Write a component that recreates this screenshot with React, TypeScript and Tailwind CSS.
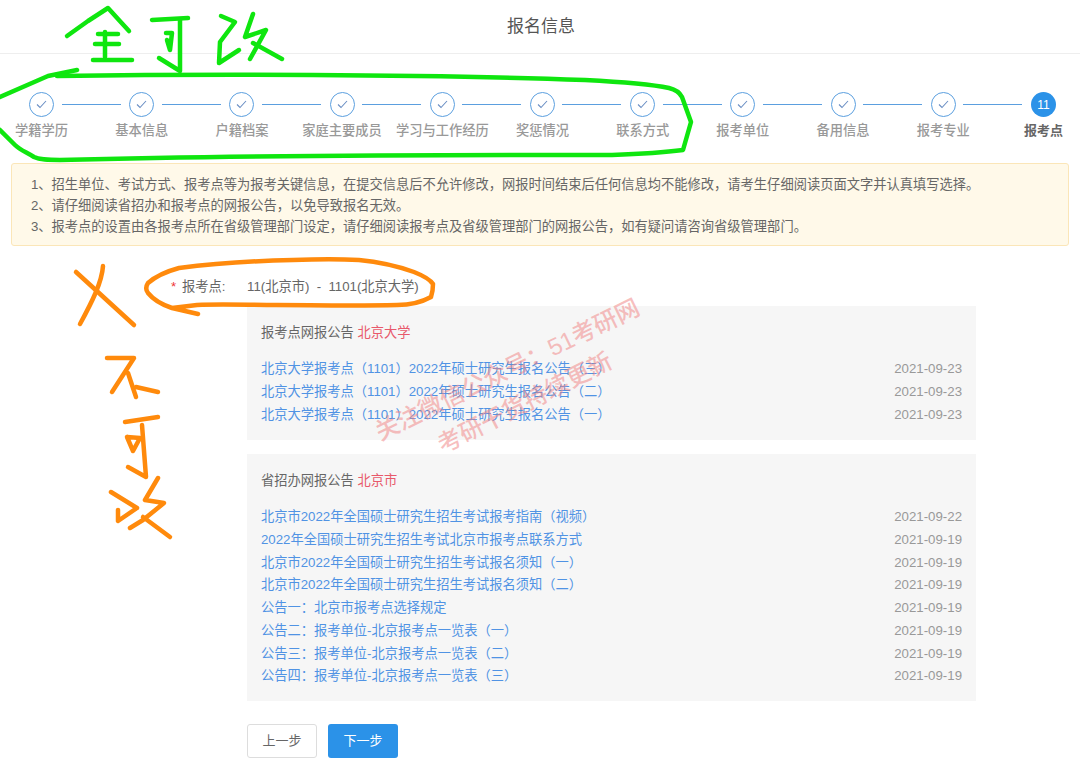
const steps = ["学籍学历", "基本信息", "户籍档案", "家庭主要成员", "学习与工作经历", "奖惩情况", "联系方式", "报考单位", "备用信息", "报考专业"];

const notes = [
  "1、招生单位、考试方式、报考点等为报考关键信息，在提交信息后不允许修改，网报时间结束后任何信息均不能修改，请考生仔细阅读页面文字并认真填写选择。",
  "2、请仔细阅读省招办和报考点的网报公告，以免导致报名无效。",
  "3、报考点的设置由各报考点所在省级管理部门设定，请仔细阅读报考点及省级管理部门的网报公告，如有疑问请咨询省级管理部门。",
];

const schoolLinks = [
  ["北京大学报考点（1101）2022年硕士研究生报名公告（三）", "2021-09-23"],
  ["北京大学报考点（1101）2022年硕士研究生报名公告（二）", "2021-09-23"],
  ["北京大学报考点（1101）2022年硕士研究生报名公告（一）", "2021-09-23"],
];

const cityLinks = [
  ["北京市2022年全国硕士研究生招生考试报考指南（视频）", "2021-09-22"],
  ["2022年全国硕士研究生招生考试北京市报考点联系方式", "2021-09-19"],
  ["北京市2022年全国硕士研究生招生考试报名须知（一）", "2021-09-19"],
  ["北京市2022年全国硕士研究生招生考试报名须知（二）", "2021-09-19"],
  ["公告一：北京市报考点选择规定", "2021-09-19"],
  ["公告二：报考单位-北京报考点一览表（一）", "2021-09-19"],
  ["公告三：报考单位-北京报考点一览表（二）", "2021-09-19"],
  ["公告四：报考单位-北京报考点一览表（三）", "2021-09-19"],
];

const greenMarks = [
  "M67 36 L88 21 L108 8 L118 19 L129 31",
  "M98 34 L118 34",
  "M105 32 L105 57",
  "M95 44 L119 44",
  "M93 60 L132 60",
  "M152 20 L188 18",
  "M166 33 L172 33 L170 50 L167 40",
  "M180 20 L180 71 L159 58",
  "M221 16 L235 22 L220 42 L219 63 L239 50",
  "M253 14 L245 37 L266 30 L250 59",
  "M253 43 L282 59",
  "M77 70 L48 76 L0 97",
  "M57 76 C200 74 420 74 585 80 C625 82 650 84 669 88 C677 90 680 93 682 97 L691 122 L683 150 C660 153 640 154 612 155 C500 155 300 154 60 160 C48 160 40 160 34 157 C26 152 20 150 15 145 L0 130",
];

const orangeMarks = [
  "M198 314 L172 308 C160 304 152 298 148 293 C145 289 146 286 148 283 C156 276 168 271 179 268 C210 264 250 261 293 260 C320 259 340 259 359 260 C380 262 400 267 414 272 C424 276 430 279 433 284 C433 290 432 294 431 297 C422 302 410 305 397 305 C350 306 310 305 276 305 C250 305 220 304 197 305 L172 308",
  "M76 272 L134 325",
  "M103 266 C102 282 92 302 80 324",
  "M107 358 L134 358 L112 392",
  "M128 373 L136 397",
  "M136 387 L158 392",
  "M125 422 L158 417",
  "M127 437 L140 438 L133 451 L127 437",
  "M142 425 L146 477 L128 467",
  "M111 492 L137 508 L118 521 L118 510",
  "M158 478 L145 500 L164 503 L143 520 L130 528",
  "M143 517 L170 537",
];

function Step({ label }: { label: string }) {
  return (
    <div className="relative flex flex-col items-center">
      <div className="flex h-[25px] w-[25px] items-center justify-center rounded-full border border-[#5b9fdf] bg-white">
        <svg width="11" height="9" viewBox="0 0 11 9" fill="none">
          <path d="M1 4.5 L4 7.5 L10 1" stroke="#6b8fc4" strokeWidth="1.1" />
        </svg>
      </div>
      <div className="absolute left-[calc(50%+20px)] top-3 h-px w-[59px] bg-[#5b9fdf]" />
      <div className="mt-[4px] whitespace-nowrap text-[13.25px] leading-[20px] font-medium text-[#999]">{label}</div>
    </div>
  );
}

function Notice({ title, place, links, className }: { title: string; place: string; links: string[][]; className: string }) {
  return (
    <div className={`bg-[#f6f6f6] px-[14px] ${className}`}>
      <div className="text-[13.25px] leading-[20px] text-[#666]">
        {title} <span className="text-[#e8596b]">{place}</span>
      </div>
      <ul className="mt-[15px]">
        {links.map(([text, date]) => (
          <li key={text} className="flex h-[22.7px] items-center justify-between text-[13.25px]">
            <a className="text-[#5093e4]">{text}</a>
            <span className="text-[#999]">{date}</span>
          </li>
        ))}
      </ul>
    </div>
  );
}

export default function App() {
  return (
    <div className="relative h-[773px] w-[1080px] overflow-hidden bg-white font-['Liberation_Sans','Noto_Sans_CJK_SC',sans-serif]">
      <header className="flex h-[54px] items-center justify-center border-b border-[#eee] pl-[2px] text-[17px] text-[#555]">报名信息</header>

      <div className="mx-[-8.5px] mt-[38px] grid w-[1102px] grid-cols-11">
        {steps.map((s) => (
          <Step key={s} label={s} />
        ))}
        <div className="flex flex-col items-center">
          <div className="flex h-[25px] w-[25px] items-center justify-center rounded-full bg-[#2b92e8] text-[12px] text-white">11</div>
          <div className="mt-[4px] text-[13px] leading-[20px] font-bold text-[#666]">报考点</div>
        </div>
      </div>

      <div className="mx-[11px] mt-[22px] rounded-[3px] border border-[#fbe6b8] bg-[#fff9e9] px-[19px] pb-[8px] pt-[10px] text-[13.25px] leading-[21px] text-[#666]">
        {notes.map((n) => (
          <p key={n}>{n}</p>
        ))}
      </div>

      <div className="mt-[31px] flex items-center pl-[171px] text-[13.25px] leading-[20px] text-[#666]">
        <span className="w-[11px] text-[#e33]">*</span>
        <span className="w-[65px]">报考点:</span>
        <span>11(北京市)&nbsp; -&nbsp; 1101(北京大学)</span>
      </div>

      <div className="ml-[247px] mt-[9px] w-[729px]">
        <Notice title="报考点网报公告" place="北京大学" links={schoolLinks} className="h-[134px] pt-[17px]" />
        <Notice title="省招办网报公告" place="北京市" links={cityLinks} className="mt-[14px] h-[247px] pt-[17px]" />
        <div className="mt-[23px] flex gap-[11px]">
          <button className="h-[34px] w-[70px] rounded-[3px] border border-[#ddd] bg-white text-[13px] text-[#666]">上一步</button>
          <button className="h-[34px] w-[70px] rounded-[3px] bg-[#2b92e8] text-[13px] text-white">下一步</button>
        </div>
      </div>

      {/* watermark over the notices */}
      <div className="pointer-events-none absolute left-[362px] top-[358px] -rotate-[26deg] whitespace-nowrap text-[24px] leading-none font-medium text-[#f08080]/50">关注微信公众号：51考研网</div>
      <div className="pointer-events-none absolute left-[429px] top-[391px] -rotate-[27deg] whitespace-nowrap text-[24px] leading-none font-medium text-[#f08080]/50">考研干货持续更新</div>

      {/* marker scribbles drawn on the screenshot */}
      <svg className="pointer-events-none absolute inset-0" width="1080" height="773" fill="none" strokeLinecap="round" strokeLinejoin="round">
        {greenMarks.map((d) => (
          <path key={d} d={d} stroke="#0fe60f" strokeWidth="4.5" />
        ))}
        {orangeMarks.map((d) => (
          <path key={d} d={d} stroke="#ff8a0c" strokeWidth="4.5" />
        ))}
      </svg>
    </div>
  );
}
